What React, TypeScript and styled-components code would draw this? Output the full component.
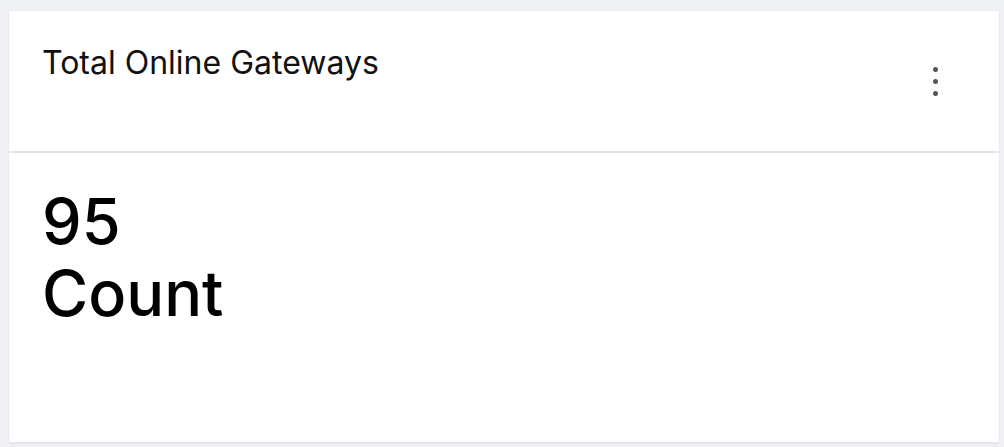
import styled, { createGlobalStyle } from "styled-components";

const GlobalStyle = createGlobalStyle`
  html, body {
    margin: 0;
    padding: 0;
    background-color: #eff0f3;
    font-family: Inter, "Noto Sans", sans-serif;
  }
`;

const Page = styled.div`
  padding: 11px 5px 5px 9px;
  height: 447px;
  box-sizing: border-box;
`;

const Card = styled.div`
  width: 990px;
  height: 431px;
  background-color: #ffffff;
  box-shadow: 0 1px 2px rgba(0, 0, 0, 0.08);
  display: flex;
  flex-direction: column;
`;

const CardHeader = styled.div`
  height: 142px;
  box-sizing: border-box;
  border-bottom: 2px solid #e2e3e5;
  display: flex;
  justify-content: space-between;
  align-items: flex-start;
  padding: 0 55px 0 33px;
`;

const Title = styled.h2`
  margin: 0;
  padding-top: 32px;
  font-size: 32px;
  font-weight: 400;
  color: #111;
`;

const MenuButton = styled.button`
  margin-top: 52px;
  border: none;
  background: none;
  padding: 4px 6px;
  display: flex;
  flex-direction: column;
  gap: 7px;
  cursor: pointer;
`;

const Dot = styled.span`
  width: 5px;
  height: 5px;
  border-radius: 50%;
  background-color: #555;
`;

const CardBody = styled.div`
  padding: 32px 33px;
`;

const Value = styled.div`
  font-size: 63px;
  font-weight: 500;
  line-height: 72px;
  color: #000;
`;

export default function App() {
  return (
    <>
      <GlobalStyle />
      <Page>
        <Card>
          <CardHeader>
            <Title>Total Online Gateways</Title>
            <MenuButton aria-label="More options">
              <Dot />
              <Dot />
              <Dot />
            </MenuButton>
          </CardHeader>
          <CardBody>
            <Value>95</Value>
            <Value>Count</Value>
          </CardBody>
        </Card>
      </Page>
    </>
  );
}
